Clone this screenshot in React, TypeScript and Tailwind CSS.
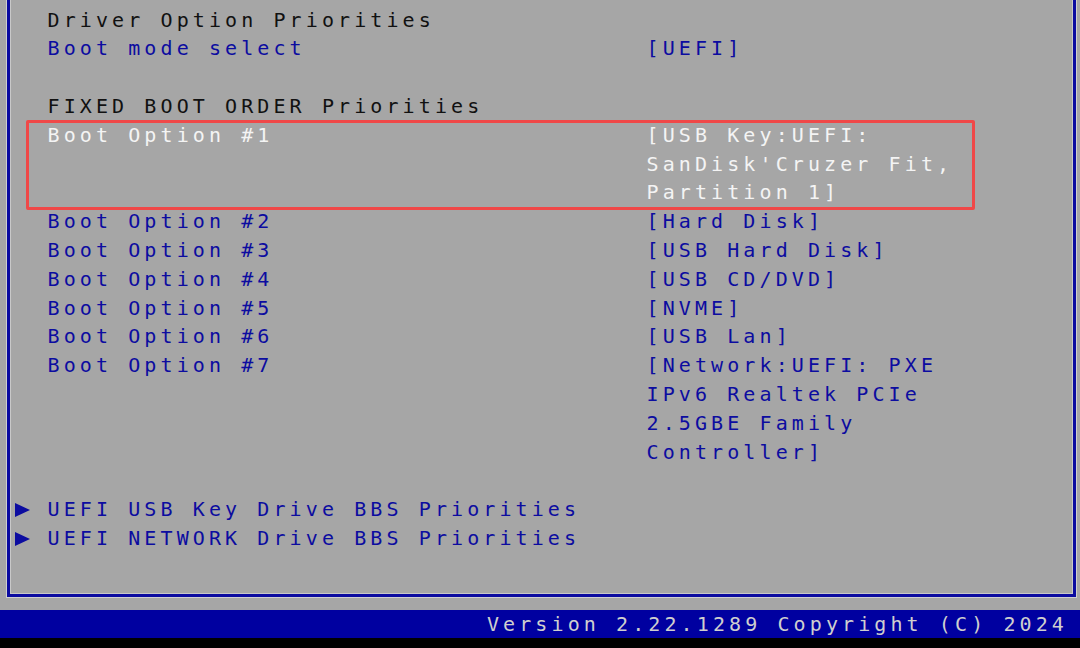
import React from "react";

type Row = {
  label?: string;
  value?: string[];
  tone?: "head" | "item" | "active";
  arrow?: boolean;
};

const rows: Row[] = [
  { label: "Driver Option Priorities", tone: "head" },
  { label: "Boot mode select", value: ["[UEFI]"] },
  {},
  { label: "FIXED BOOT ORDER Priorities", tone: "head" },
  {
    label: "Boot Option #1",
    value: ["[USB Key:UEFI:", "SanDisk'Cruzer Fit,", "Partition 1]"],
    tone: "active",
  },
  { label: "Boot Option #2", value: ["[Hard Disk]"] },
  { label: "Boot Option #3", value: ["[USB Hard Disk]"] },
  { label: "Boot Option #4", value: ["[USB CD/DVD]"] },
  { label: "Boot Option #5", value: ["[NVME]"] },
  { label: "Boot Option #6", value: ["[USB Lan]"] },
  {
    label: "Boot Option #7",
    value: ["[Network:UEFI: PXE", "IPv6 Realtek PCIe", "2.5GBE Family", "Controller]"],
  },
  {},
  { label: "UEFI USB Key Drive BBS Priorities", arrow: true },
  { label: "UEFI NETWORK Drive BBS Priorities", arrow: true },
];

const toneClass = (tone?: Row["tone"]) => {
  if (tone === "head") return "text-[#111111]";
  if (tone === "active") return "text-[#f4f4f4]";
  return "text-[#0c0ca0]";
};

const Arrow = () => (
  <svg width="16" height="14" viewBox="0 0 16 14" className="ml-[4px] mt-[8px]">
    <polygon points="0,0 15,7 0,14" fill="#0c0ca0" />
  </svg>
);

export default function App() {
  return (
    <div
      className="relative w-[1080px] h-[648px] overflow-hidden bg-[#a6a6a6] flex flex-col text-[20px] leading-[28.8px] tracking-[4.1px]"
      style={{ fontFamily: '"DejaVu Sans Mono", "Liberation Mono", monospace' }}
    >
      <div className="h-[598px] ml-[6px] mr-[3px] border-x border-b border-[#cfcfcf] border-t-0">
        <div className="h-full border-x-[3px] border-b-[3px] border-t-0 border-[#0a0aa0]">
          <div className="h-full border-x border-b border-t-0 border-[#c8c8c8] pt-[5.6px] whitespace-pre">
            {rows.map((r, i) => (
              <div key={i} className={`flex ${toneClass(r.tone)}`}>
                <div className="w-[36.5px] shrink-0">{r.arrow && <Arrow />}</div>
                <div className="w-[599px] shrink-0">{r.label ?? " "}</div>
                <div className="flex flex-col">
                  {(r.value ?? []).map((v, j) => (
                    <div key={j}>{v}</div>
                  ))}
                </div>
              </div>
            ))}
          </div>
        </div>
      </div>

      <div className="h-[12px]" />

      <div className="h-[28px] bg-[#0000a0] flex items-center justify-end pr-[12px] text-[#cfcfcf]">
        Version 2.22.1289 Copyright (C) 2024
      </div>
      <div className="h-[10px] bg-black" />

      <div className="absolute left-[26px] top-[120px] w-[949px] h-[90px] border-[3px] border-[#f04848] rounded-[2px] pointer-events-none" />
    </div>
  );
}
